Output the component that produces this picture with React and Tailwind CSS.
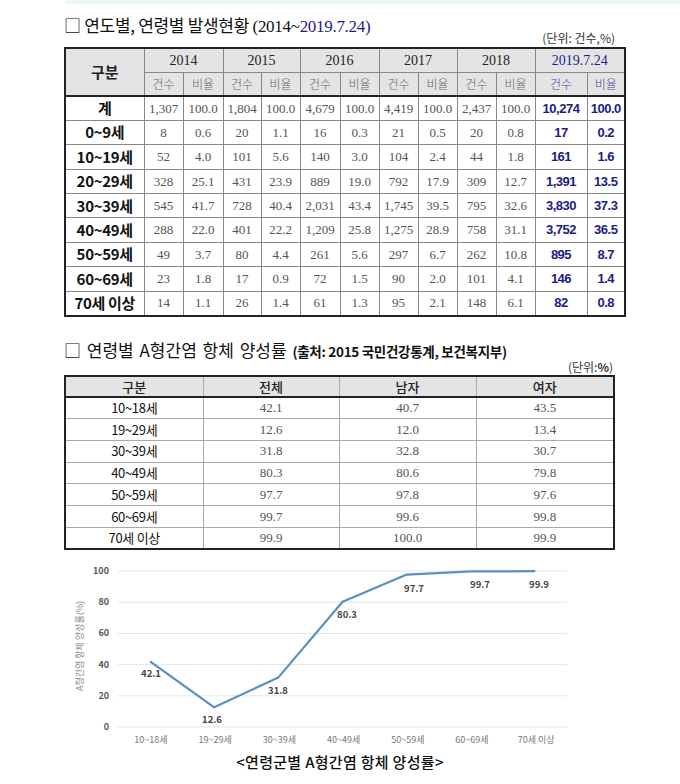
import React from 'react';

const SANS = { fontFamily: '"Noto Sans CJK KR", "Noto Sans", sans-serif' };
const SERIF = { fontFamily: '"Liberation Serif", "Noto Sans CJK KR", serif' };

const YEARS = ['2014', '2015', '2016', '2017', '2018'];

const INCIDENCE = [
  ['계', '1,307', '100.0', '1,804', '100.0', '4,679', '100.0', '4,419', '100.0', '2,437', '100.0', '10,274', '100.0'],
  ['0~9세', '8', '0.6', '20', '1.1', '16', '0.3', '21', '0.5', '20', '0.8', '17', '0.2'],
  ['10~19세', '52', '4.0', '101', '5.6', '140', '3.0', '104', '2.4', '44', '1.8', '161', '1.6'],
  ['20~29세', '328', '25.1', '431', '23.9', '889', '19.0', '792', '17.9', '309', '12.7', '1,391', '13.5'],
  ['30~39세', '545', '41.7', '728', '40.4', '2,031', '43.4', '1,745', '39.5', '795', '32.6', '3,830', '37.3'],
  ['40~49세', '288', '22.0', '401', '22.2', '1,209', '25.8', '1,275', '28.9', '758', '31.1', '3,752', '36.5'],
  ['50~59세', '49', '3.7', '80', '4.4', '261', '5.6', '297', '6.7', '262', '10.8', '895', '8.7'],
  ['60~69세', '23', '1.8', '17', '0.9', '72', '1.5', '90', '2.0', '101', '4.1', '146', '1.4'],
  ['70세 이상', '14', '1.1', '26', '1.4', '61', '1.3', '95', '2.1', '148', '6.1', '82', '0.8'],
];

const ANTIBODY = [
  ['10~18세', '42.1', '40.7', '43.5'],
  ['19~29세', '12.6', '12.0', '13.4'],
  ['30~39세', '31.8', '32.8', '30.7'],
  ['40~49세', '80.3', '80.6', '79.8'],
  ['50~59세', '97.7', '97.8', '97.6'],
  ['60~69세', '99.7', '99.6', '99.8'],
  ['70세 이상', '99.9', '100.0', '99.9'],
];

const CHART = [
  { label: '10~18세', v: 42.1, lx: 151, ly: 669 },
  { label: '19~29세', v: 12.6, lx: 212, ly: 715 },
  { label: '30~39세', v: 31.8, lx: 278, ly: 686 },
  { label: '40~49세', v: 80.3, lx: 347, ly: 610 },
  { label: '50~59세', v: 97.7, lx: 414, ly: 584 },
  { label: '60~69세', v: 99.7, lx: 480, ly: 580 },
  { label: '70세 이상', v: 99.9, lx: 539, ly: 580 },
];

// chart is drawn in page coordinates, shifted up by the svg's top (550)
const TOP = 550;
const px = (i) => 150 + i * 64.2;
const py = (v) => 722 - v * 1.56 - TOP;

const Chart = () => {
  const points = CHART.map((d, i) => `${px(i)},${py(d.v)}`).join(' ');
  return (
    <svg width="680" height="196" className="block">
      {[0, 20, 40, 60, 80, 100].map((t) => (
        <g key={t}>
          <line x1="118" x2="567" y1={py(t)} y2={py(t)} stroke="#e6e6e6" strokeWidth="1" />
          <text x="109" y={py(t) + 3} textAnchor="end" fontSize="9" fontWeight="700" fill="#555" style={SANS}>
            {t}
          </text>
        </g>
      ))}
      <text
        transform={`translate(83 ${641 - TOP}) rotate(-90)`}
        textAnchor="middle"
        fontSize="9"
        fill="#888"
        style={SANS}
      >
        A형간염 항체 양성률(%)
      </text>
      <polyline points={points} fill="none" stroke="#5b8fc2" strokeWidth="2.2" strokeLinejoin="round" />
      {CHART.map((d, i) => (
        <g key={d.label}>
          <text x={d.lx} y={d.ly - TOP + 3} textAnchor="middle" fontSize="9.5" fontWeight="700" fill="#444" style={SANS}>
            {d.v.toFixed(1)}
          </text>
          <text x={px(i) + 1} y={735 - TOP + 3} textAnchor="middle" fontSize="9" fill="#777" style={SANS}>
            {d.label}
          </text>
        </g>
      ))}
    </svg>
  );
};

const IncidenceTable = () => (
  <table className="border-collapse table-fixed border-2 border-[#222] w-[561px]">
    <colgroup>
      <col className="w-[79px]" />
      <col className="w-[39px]" /><col className="w-[40px]" />
      <col className="w-[38px]" /><col className="w-[39px]" />
      <col className="w-[40px]" /><col className="w-[39px]" />
      <col className="w-[39px]" /><col className="w-[39px]" />
      <col className="w-[39px]" /><col className="w-[39px]" />
      <col className="w-[52px]" /><col className="w-[38px]" />
    </colgroup>
    <thead>
      <tr className="h-[24px] bg-[#e4e4e4]">
        <th rowSpan={2} className="border border-[#888] border-b-2 border-b-[#222] text-[15px] font-bold text-[#222]" style={SANS}>
          구분
        </th>
        {YEARS.map((y) => (
          <th key={y} colSpan={2} className="border border-[#888] text-[14px] font-normal text-[#222]" style={SERIF}>
            {y}
          </th>
        ))}
        <th colSpan={2} className="border border-[#888] text-[14px] font-normal text-[#1c1c86]" style={SERIF}>
          2019.7.24
        </th>
      </tr>
      <tr className="h-[24px] bg-[#e4e4e4]">
        {[...YEARS, 'x'].map((y) =>
          ['건수', '비율'].map((s) => (
            <th
              key={y + s}
              className={`border border-[#888] border-b-2 border-b-[#222] text-[12px] font-light ${y === 'x' ? 'text-[#4a4aa0]' : 'text-[#666]'}`}
              style={SANS}
            >
              {s}
            </th>
          ))
        )}
      </tr>
    </thead>
    <tbody>
      {INCIDENCE.map(([label, ...vals]) => (
        <tr key={label} className="h-[24.4px]">
          <td className="border border-[#888] text-center text-[15px] font-semibold text-[#111] tracking-[-0.3px]" style={SANS}>
            {label}
          </td>
          {vals.map((v, i) =>
            i >= 10 ? (
              <td
                key={i}
                className="border border-[#888] text-center text-[13px] font-semibold text-[#1c1c86] tracking-[-0.5px]"
                style={{ fontFamily: '"Liberation Sans", sans-serif' }}
              >
                {v}
              </td>
            ) : (
              <td key={i} className="border border-[#888] text-center text-[13px] text-[#555]" style={SERIF}>
                {v}
              </td>
            )
          )}
        </tr>
      ))}
    </tbody>
  </table>
);

const AntibodyTable = () => (
  <table className="border-collapse table-fixed border-2 border-[#222] w-[549px]">
    <colgroup>
      <col className="w-[138px]" />
      <col className="w-[136px]" />
      <col className="w-[137px]" />
      <col className="w-[138px]" />
    </colgroup>
    <thead>
      <tr className="h-[21px] bg-[#e4e4e4]">
        {['구분', '전체', '남자', '여자'].map((h) => (
          <th key={h} className="border border-[#aaa] border-b-2 border-b-[#222] text-[13px] font-medium text-[#222]" style={SANS}>
            {h}
          </th>
        ))}
      </tr>
    </thead>
    <tbody>
      {ANTIBODY.map(([label, ...vals]) => (
        <tr key={label} className="h-[21.7px]">
          <td className="border border-[#aaa] text-center text-[13px] text-[#111] tracking-[-0.3px]" style={SANS}>
            {label}
          </td>
          {vals.map((v, i) => (
            <td key={i} className="border border-[#aaa] text-center text-[13px] text-[#555]" style={SERIF}>
              {v}
            </td>
          ))}
        </tr>
      ))}
    </tbody>
  </table>
);

export default function App() {
  return (
    <div className="w-[680px] h-[784px] bg-white overflow-hidden">
      <div className="ml-[65px] h-[4px] bg-[#eef7fa]" />

      <div className="pl-[64px] pr-[55px] mt-[11px]">
        <div className="flex justify-between h-[32px]">
          <h1 className="self-start text-[17px] leading-[20px] text-[#111] font-normal tracking-[-0.3px]" style={SANS}>
            □ 연도별, 연령별 발생현황 <span style={SERIF}>(2014~</span>
            <span className="text-[#1c1c86]" style={SERIF}>2019.7.24)</span>
          </h1>
          <span className="self-end text-[12px] leading-[14px] text-[#333] mb-[2px] mr-[10px]" style={SANS}>
            (단위: 건수,%)
          </span>
        </div>
        <IncidenceTable />
      </div>

      <div className="pl-[64px] pr-[67px] mt-[23px]">
        <div className="flex justify-between h-[35px]">
          <h2 className="self-start text-[17px] leading-[20px] text-[#111] font-normal [word-spacing:2px]" style={SANS}>
            □ 연령별 A형간염 항체 양성률{' '}
            <span className="text-[13.5px] font-bold tracking-[-0.3px] [word-spacing:0px]">(출처: 2015 국민건강통계, 보건복지부)</span>
          </h2>
          <span className="self-end text-[12px] leading-[14px] text-[#333] mb-[1px]" style={SANS}>
            (단위:<b>%</b>)
          </span>
        </div>
        <AntibodyTable />
      </div>

      <div className="mt-[5px]">
        <Chart />
      </div>

      <p className="mt-[2px] text-center text-[15px] leading-[18px] tracking-[0.3px] text-[#111] font-medium" style={SANS}>
        &lt;연령군별 A형간염 항체 양성률&gt;
      </p>
    </div>
  );
}
